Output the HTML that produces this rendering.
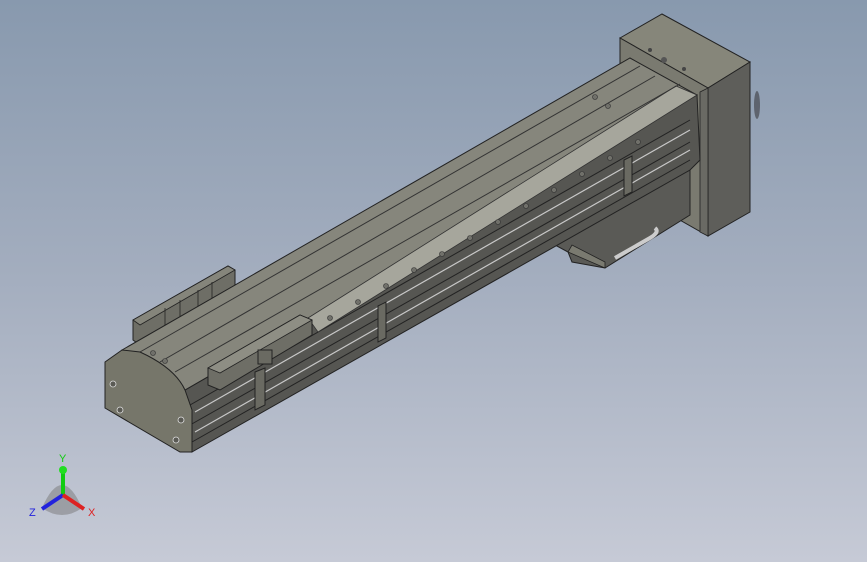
<!DOCTYPE html>
<html><head><style>
html,body{margin:0;padding:0;width:867px;height:562px;overflow:hidden}
body{background:linear-gradient(180deg,#8899ae 0%,#a4aebf 50%,#c6cad6 100%)}
svg{position:absolute;left:0;top:0}
</style></head><body>
<svg width="867" height="562" viewBox="0 0 867 562">
<ellipse cx="757" cy="105" rx="3" ry="14" fill="#3a3a40" opacity=".6"/>
<!-- motor block -->
<polygon points="620,38 662,14 750,62 708,88" fill="#86867a" stroke="#222" stroke-width="1"/>
<polygon points="708,88 750,62 750,212 708,236" fill="#5e5e5a" stroke="#222" stroke-width="1"/>
<polygon points="620,38 708,88 708,236 620,186" fill="#7a7a70" stroke="#222" stroke-width="1"/>
<polygon points="700,92 708,88 708,236 700,232" fill="#6a6a64" stroke="#222" stroke-width=".8"/>
<circle cx="650" cy="50" r="2" fill="#444"/><circle cx="664" cy="60" r="3" fill="#555"/><circle cx="684" cy="69" r="2" fill="#444"/>
<!-- rear flange tabs -->
<polygon points="133,320 228,266 235,270 235,290 140,345 133,340" fill="#6e6e66" stroke="#222" stroke-width="1"/>
<polygon points="133,320 228,266 235,270 140,325" fill="#85857b" stroke="#222" stroke-width=".8"/>
<g stroke="#222" stroke-width=".8"><line x1="165" y1="308" x2="165" y2="328"/><line x1="180" y1="300" x2="180" y2="320"/><line x1="198" y1="290" x2="198" y2="310"/><line x1="212" y1="282" x2="212" y2="302"/></g>
<!-- motor below -->
<polygon points="555,245 640,195 690,170 690,215 605,268 572,262 568,252" fill="#5a5a56" stroke="#222" stroke-width="1"/>
<polygon points="568,252 605,268 605,262 572,245" fill="#7a7a70" stroke="#222" stroke-width=".8"/>
<path d="M615 258 L650 238 Q660 232 655 228" fill="none" stroke="#ccc" stroke-width="4"/>
<!-- body side -->
<polygon points="185,390 697,95 700,160 690,170 192,452" fill="#565652" stroke="#222" stroke-width="1"/>
<g stroke="#c8c8c8" stroke-width="1.2">
<line x1="195" y1="412" x2="690" y2="130"/>
<line x1="195" y1="432" x2="690" y2="150"/>
</g>
<g stroke="#222" stroke-width="1">
<line x1="190" y1="405" x2="690" y2="120"/>
<line x1="190" y1="425" x2="690" y2="142"/>
<line x1="192" y1="442" x2="690" y2="160"/>
</g>
<!-- top face -->
<polygon points="122,350 630,58 697,95 185,390" fill="#86867c" stroke="#222" stroke-width="1"/>
<polygon points="308,318 676,86 697,95 318,332" fill="#a6a69c" stroke="#333" stroke-width=".8"/>
<g stroke="#333" stroke-width="1">
<line x1="140" y1="352" x2="640" y2="66"/>
<line x1="160" y1="362" x2="655" y2="76"/>
<line x1="175" y1="372" x2="680" y2="84"/>
</g>
<g fill="#70706a" stroke="#333" stroke-width=".6">
<circle cx="330" cy="318" r="2.5"/><circle cx="358" cy="302" r="2.5"/><circle cx="386" cy="286" r="2.5"/><circle cx="414" cy="270" r="2.5"/><circle cx="442" cy="254" r="2.5"/><circle cx="470" cy="238" r="2.5"/><circle cx="498" cy="222" r="2.5"/><circle cx="526" cy="206" r="2.5"/><circle cx="554" cy="190" r="2.5"/><circle cx="582" cy="174" r="2.5"/><circle cx="610" cy="158" r="2.5"/><circle cx="638" cy="142" r="2.5"/>
<circle cx="595" cy="97" r="2.5"/><circle cx="608" cy="106" r="2.5"/><circle cx="153" cy="353" r="2.5"/><circle cx="165" cy="361" r="2.5"/>
</g>
<!-- slider block front -->
<polygon points="208,368 300,315 312,320 312,335 220,390 208,385" fill="#6e6e66" stroke="#222" stroke-width="1"/>
<polygon points="208,368 300,315 312,320 220,373" fill="#8e8e84" stroke="#222" stroke-width=".8"/>
<rect x="258" y="350" width="14" height="14" fill="#6a6a62" stroke="#222"/>
<polygon points="255,372 265,368 265,405 255,410" fill="#6a6a62" stroke="#222"/>
<polygon points="378,306 386,302 386,338 378,342" fill="#6a6a62" stroke="#222"/>
<polygon points="624,160 632,156 632,192 624,196" fill="#6a6a62" stroke="#222"/>
<!-- end face -->
<path d="M105,362 L122,350 L140,352 Q175,368 185,390 L192,410 L192,452 L180,452 L105,408 Z" fill="#76766a" stroke="#222" stroke-width="1"/>
<g fill="#5a5a54" stroke="#ddd" stroke-width=".8">
<circle cx="113" cy="384" r="3"/><circle cx="120" cy="410" r="3"/><circle cx="181" cy="420" r="3"/><circle cx="176" cy="440" r="3"/>
</g>
<!-- triad -->
<path d="M42 508 Q62 462 82 508 Q62 522 42 508Z" fill="#777" opacity=".5"/>
<line x1="63" y1="495" x2="63" y2="470" stroke="#1c1" stroke-width="4"/>
<circle cx="63" cy="470" r="4" fill="#2d2"/>
<line x1="63" y1="495" x2="42" y2="509" stroke="#22d" stroke-width="4"/>
<line x1="63" y1="495" x2="84" y2="509" stroke="#d22" stroke-width="4"/>
<text x="59" y="462" font-family="Liberation Sans,sans-serif" font-size="11" fill="#1c1">Y</text>
<text x="29" y="516" font-family="Liberation Sans,sans-serif" font-size="11" fill="#22d">Z</text>
<text x="88" y="516" font-family="Liberation Sans,sans-serif" font-size="11" fill="#d22">X</text>
</svg>
</body></html>
